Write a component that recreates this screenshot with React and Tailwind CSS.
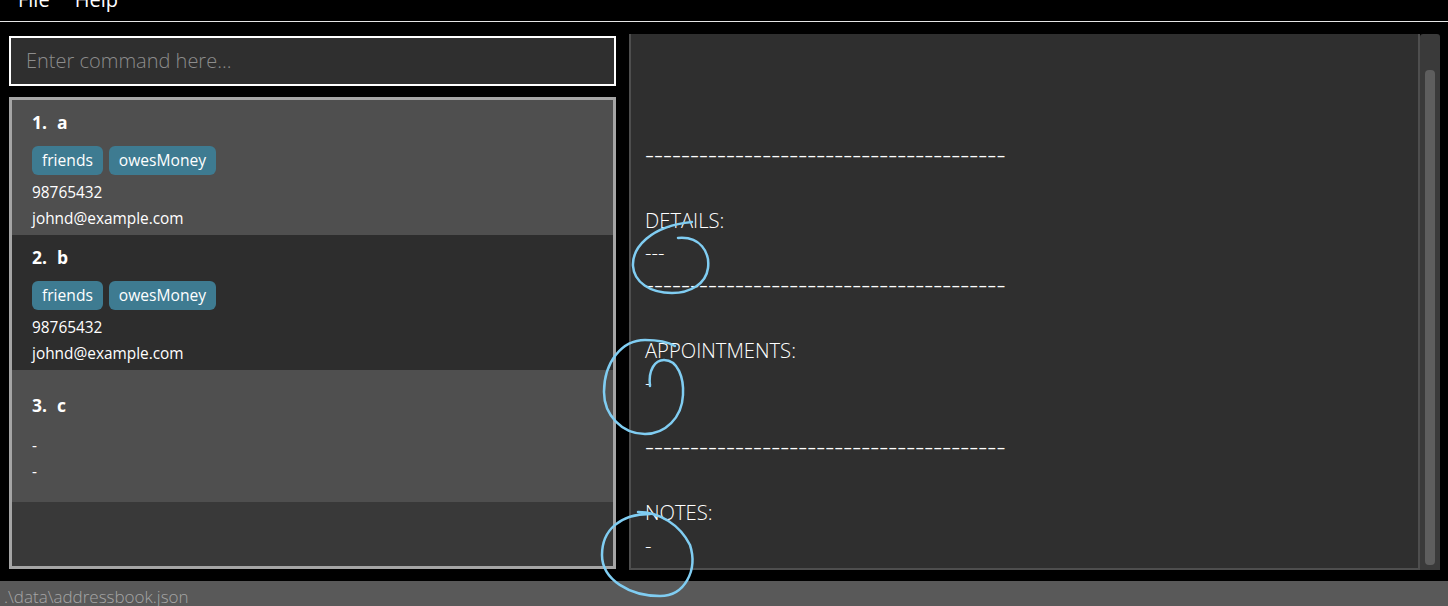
import React from "react";

const FONT = { fontFamily: '"Open Sans", "Noto Sans", sans-serif' };

function Tag({ children }) {
  return (
    <span className="inline-flex h-[29px] items-center rounded-[6px] bg-[#3e7b91] px-[10px] text-[15.6px] text-white">
      {children}
    </span>
  );
}

function Name({ index, name }) {
  return (
    <div className="flex text-[17.5px] font-bold leading-[24px] text-white">
      <span>{index}.</span>
      <span className="ml-[10px]">{name}</span>
    </div>
  );
}

function PersonCell({ index, name, tags, phone, email, bg }) {
  return (
    <div className={`flex h-[135px] flex-col px-[20px] pt-[10px] ${bg}`}>
      <Name index={index} name={name} />
      <div className="mt-[12px] flex gap-[6px]">
        {tags.map((t) => (
          <Tag key={t}>{t}</Tag>
        ))}
      </div>
      <div className="mt-[5px] text-[15.4px] leading-[26px] text-white">{phone}</div>
      <div className="text-[15.4px] leading-[26px] text-white">{email}</div>
    </div>
  );
}

const DASHES = "----------------------------------------";

export default function App() {
  const lines = [
    "",
    "",
    "",
    DASHES,
    "",
    "DETAILS:",
    "---",
    DASHES,
    "",
    "APPOINTMENTS:",
    "-",
    "",
    DASHES,
    "",
    "NOTES:",
    "-",
  ];
  return (
    <div className="relative flex h-[606px] w-[1448px] flex-col overflow-hidden bg-black" style={FONT}>
      {/* menu bar */}
      <div className="h-[21px] shrink-0 overflow-hidden">
        <div className="-mt-[12px] flex gap-[25px] pl-[18px] text-[20px] leading-[24px] text-white">
          <span>File</span>
          <span>Help</span>
        </div>
      </div>
      <div className="h-px shrink-0 bg-[#e6e6e6]" />

      {/* main */}
      <div className="flex min-h-0 flex-1 pl-[9px] pr-[8px] pt-[12px]">
        {/* left column */}
        <div className="flex w-[607px] shrink-0 flex-col pt-[2px]">
          <div className="flex h-[50px] items-center border-2 border-white bg-[#2f2f2f] px-[15px]">
            <span className="text-[20px] font-light text-[#8c8c8c]">Enter command here...</span>
          </div>
          <div className="mt-[11px] flex h-[472px] flex-col border-[3px] border-[#a5a5a5] bg-[#393939]">
            <PersonCell
              index={1}
              name="a"
              tags={["friends", "owesMoney"]}
              phone="98765432"
              email="johnd@example.com"
              bg="bg-[#4f4f4f]"
            />
            <PersonCell
              index={2}
              name="b"
              tags={["friends", "owesMoney"]}
              phone="98765432"
              email="johnd@example.com"
              bg="bg-[#2d2d2d]"
            />
            <div className="flex h-[132px] flex-col bg-[#4f4f4f] px-[20px] pt-[23px]">
              <Name index={3} name="c" />
              <div className="mt-[16px] text-[15.4px] leading-[26px] text-white">-</div>
              <div className="text-[15.4px] leading-[26px] text-white">-</div>
            </div>
          </div>
        </div>

        {/* right column */}
        <div className="ml-[13px] flex h-[536px] flex-1">
          <div className="flex-1 border-x-2 border-b-2 border-[#4e4e4e] bg-[#2f2f2f] pl-[14px] pt-[7px]">
            <div className="whitespace-pre text-[20.2px] font-light leading-[32.5px] text-white">
              {lines.map((l, i) =>
                l === DASHES ? (
                  <div key={i} className="h-[32.5px] text-[28px] leading-[28px]">
                    {l}
                  </div>
                ) : (
                  <div key={i} className="h-[32.5px]">
                    {l}
                  </div>
                )
              )}
            </div>
          </div>
          <div className="flex w-[20px] shrink-0 flex-col rounded-t-[3px] bg-[#3a3a3a] px-[5px] pb-[5px] pt-[36px]">
            <div className="flex-1 rounded-[4px] bg-[#5e5e5e]" />
          </div>
        </div>
      </div>

      {/* status bar */}
      <div className="mt-[11px] h-[25px] shrink-0 overflow-hidden bg-[#595959] pl-[4px]">
        <div className="pt-[3px] text-[17px] font-light leading-[26px] text-[#a6a6a6]">.\data\addressbook.json</div>
      </div>

      {/* hand-drawn annotations */}
      <svg className="pointer-events-none absolute left-0 top-0" width="1448" height="606" fill="none">
        <g stroke="#80cdf2" strokeWidth="2.5" strokeLinecap="round">
          <path d="M678,238 C700,236 710,252 708,268 C706,284 690,293 672,293 C650,293 634,282 633,266 C632,248 650,226 692,222" />
          <path d="M650,386 C648,370 655,360 664,360 C678,360 684,378 683,395 C682,418 665,434 645,434 C622,434 604,415 604,392 C604,362 622,340 645,340 C658,340 668,342 675,346" />
          <path d="M638,512 C660,512 680,525 690,545 C698,570 685,596 660,596 C630,596 602,580 602,555 C602,530 620,514 650,514" />
        </g>
      </svg>
    </div>
  );
}
